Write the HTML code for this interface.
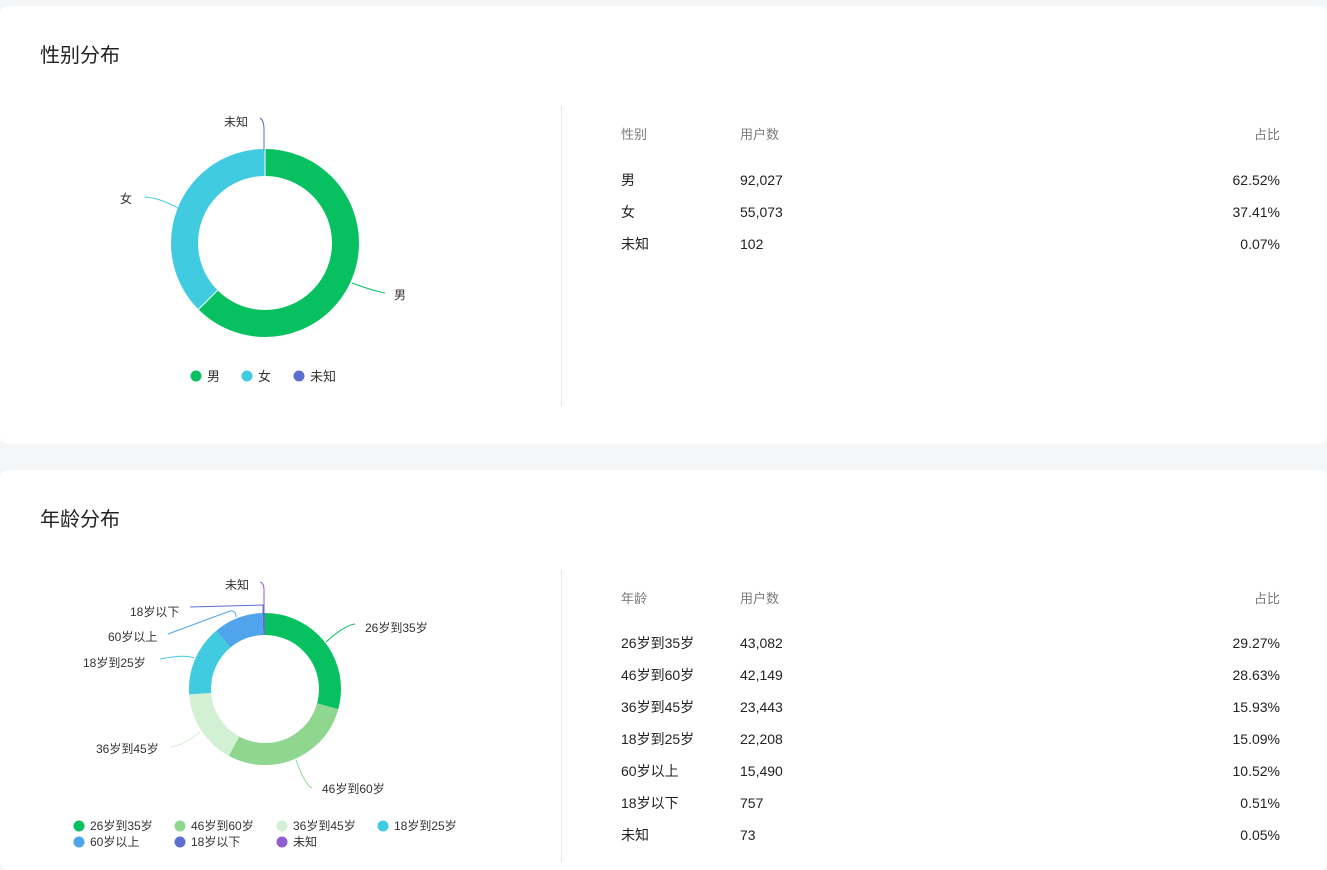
<!DOCTYPE html>
<html><head><meta charset="utf-8"><style>
*{margin:0;padding:0;box-sizing:border-box}
body{width:1327px;height:862px;background:#f5f6f7;font-family:"Liberation Sans","Noto Sans CJK SC",sans-serif;overflow:hidden;position:relative;color:#222}
.card{position:absolute;left:0;width:1327px;background:#fff;border-radius:8px}
.title{position:absolute;left:40px;font-size:20px;color:#222;line-height:26px}
.div{position:absolute;left:561px;width:1px;background:#e8e8e8}
.t{position:absolute;font-size:14px;white-space:nowrap;line-height:20px;height:20px}
.h{color:#7a7a7a;font-size:13px}
.r{text-align:right;right:47px}
svg{position:absolute;left:0;top:0}
svg text{font-family:"Liberation Sans","Noto Sans CJK SC",sans-serif;font-size:12px;fill:#333}
</style></head><body>
<div class="card" style="top:6px;height:438px"></div>
<div class="card" style="top:470px;height:400px"></div>
<div class="title" style="top:43px">性别分布</div>
<div class="title" style="top:507px">年龄分布</div>
<div class="div" style="top:106px;height:300px"></div>
<div class="div" style="top:570px;height:292px"></div>

<div class="t h" style="left:621px;top:125px">性别</div>
<div class="t h" style="left:740px;top:125px">用户数</div>
<div class="t h r" style="top:125px">占比</div>
<div class="t" style="left:621px;top:170px">男</div><div class="t" style="left:740px;top:170px">92,027</div><div class="t r" style="top:170px">62.52%</div>
<div class="t" style="left:621px;top:202px">女</div><div class="t" style="left:740px;top:202px">55,073</div><div class="t r" style="top:202px">37.41%</div>
<div class="t" style="left:621px;top:234px">未知</div><div class="t" style="left:740px;top:234px">102</div><div class="t r" style="top:234px">0.07%</div>

<div class="t h" style="left:621px;top:589px">年龄</div>
<div class="t h" style="left:740px;top:589px">用户数</div>
<div class="t h r" style="top:589px">占比</div>
<div class="t" style="left:621px;top:633px">26岁到35岁</div><div class="t" style="left:740px;top:633px">43,082</div><div class="t r" style="top:633px">29.27%</div>
<div class="t" style="left:621px;top:665px">46岁到60岁</div><div class="t" style="left:740px;top:665px">42,149</div><div class="t r" style="top:665px">28.63%</div>
<div class="t" style="left:621px;top:697px">36岁到45岁</div><div class="t" style="left:740px;top:697px">23,443</div><div class="t r" style="top:697px">15.93%</div>
<div class="t" style="left:621px;top:729px">18岁到25岁</div><div class="t" style="left:740px;top:729px">22,208</div><div class="t r" style="top:729px">15.09%</div>
<div class="t" style="left:621px;top:761px">60岁以上</div><div class="t" style="left:740px;top:761px">15,490</div><div class="t r" style="top:761px">10.52%</div>
<div class="t" style="left:621px;top:793px">18岁以下</div><div class="t" style="left:740px;top:793px">757</div><div class="t r" style="top:793px">0.51%</div>
<div class="t" style="left:621px;top:825px">未知</div><div class="t" style="left:740px;top:825px">73</div><div class="t r" style="top:825px">0.05%</div>

<svg width="560" height="862" viewBox="0 0 560 862">
<g transform="translate(265,243) rotate(-90)" fill="none" stroke-width="27">
<circle r="80.5" stroke="#07c160" stroke-dasharray="316.2 505.8"/>
<circle r="80.5" stroke="#40cbe0" stroke-dasharray="189.2 505.8" stroke-dashoffset="-316.2"/>
<circle r="80.5" stroke="#5b6fd0" stroke-dasharray="1 505.8" stroke-dashoffset="-505"/>
</g>
<line x1="265" y1="149" x2="265" y2="176" stroke="#fff"/>
<line x1="198.5" y1="309.4" x2="217.6" y2="290.3" stroke="#fff"/>
<path d="M352 283 Q370 290 385 293" stroke="#07c160" fill="none"/>
<path d="M178 208 Q160 198 145 197" stroke="#40cbe0" fill="none"/>
<path d="M264 150 L264 130 Q264 120 260 118" stroke="#5b6fd0" fill="none"/>
<text x="394" y="299">男</text><text x="120" y="203">女</text><text x="224" y="126">未知</text>
<circle cx="196" cy="376" r="5.5" fill="#07c160"/><text x="207" y="381" style="font-size:13px">男</text>
<circle cx="247" cy="376" r="5.5" fill="#40cbe0"/><text x="258" y="381" style="font-size:13px">女</text>
<circle cx="299" cy="376" r="5.5" fill="#5b6fd0"/><text x="310" y="381" style="font-size:13px">未知</text>

<g transform="translate(265,689) rotate(-90)" fill="none" stroke-width="22">
<circle r="65" stroke="#07c160" stroke-dasharray="119.54 408.4"/>
<circle r="65" stroke="#8fd68e" stroke-dasharray="116.93 408.4" stroke-dashoffset="-119.54"/>
<circle r="65" stroke="#d2f0d3" stroke-dasharray="65.06 408.4" stroke-dashoffset="-236.47"/>
<circle r="65" stroke="#40cbe0" stroke-dasharray="61.63 408.4" stroke-dashoffset="-301.53"/>
<circle r="65" stroke="#4fa4ec" stroke-dasharray="42.96 408.4" stroke-dashoffset="-363.16"/>
<circle r="65" stroke="#5b6fd0" stroke-dasharray="2.08 408.4" stroke-dashoffset="-406.12"/>
<circle r="65" stroke="#8e5fd0" stroke-dasharray="0.5 408.4" stroke-dashoffset="-407.9"/>
</g>
<path d="M326 642 Q345 625 355 624" stroke="#07c160" fill="none"/>
<path d="M296 760 Q305 785 312 788" stroke="#8fd68e" fill="none"/>
<path d="M200 732 Q185 745 170 747" stroke="#d2f0d3" fill="none"/>
<path d="M194 658 Q185 654 160 659" stroke="#40cbe0" fill="none"/>
<path d="M236 617 Q236 610 230 611 L168 634" stroke="#4fa4ec" fill="none"/>
<path d="M263 613 L263 605 L190 607" stroke="#5b6fd0" fill="none"/>
<path d="M264 613 L264 590 Q264 583 260 582" stroke="#8e5fd0" fill="none"/>
<text x="365" y="632">26岁到35岁</text>
<text x="322" y="793">46岁到60岁</text>
<text x="96" y="753">36岁到45岁</text>
<text x="83" y="667">18岁到25岁</text>
<text x="108" y="641">60岁以上</text>
<text x="130" y="616">18岁以下</text>
<text x="225" y="589">未知</text>
<circle cx="79" cy="826" r="5.5" fill="#07c160"/><text x="90" y="830">26岁到35岁</text>
<circle cx="180" cy="826" r="5.5" fill="#8fd68e"/><text x="191" y="830">46岁到60岁</text>
<circle cx="282" cy="826" r="5.5" fill="#d2f0d3"/><text x="293" y="830">36岁到45岁</text>
<circle cx="383" cy="826" r="5.5" fill="#40cbe0"/><text x="394" y="830">18岁到25岁</text>
<circle cx="79" cy="842" r="5.5" fill="#4fa4ec"/><text x="90" y="846">60岁以上</text>
<circle cx="180" cy="842" r="5.5" fill="#5b6fd0"/><text x="191" y="846">18岁以下</text>
<circle cx="282" cy="842" r="5.5" fill="#8e5fd0"/><text x="293" y="846">未知</text>
</svg>
</body></html>
